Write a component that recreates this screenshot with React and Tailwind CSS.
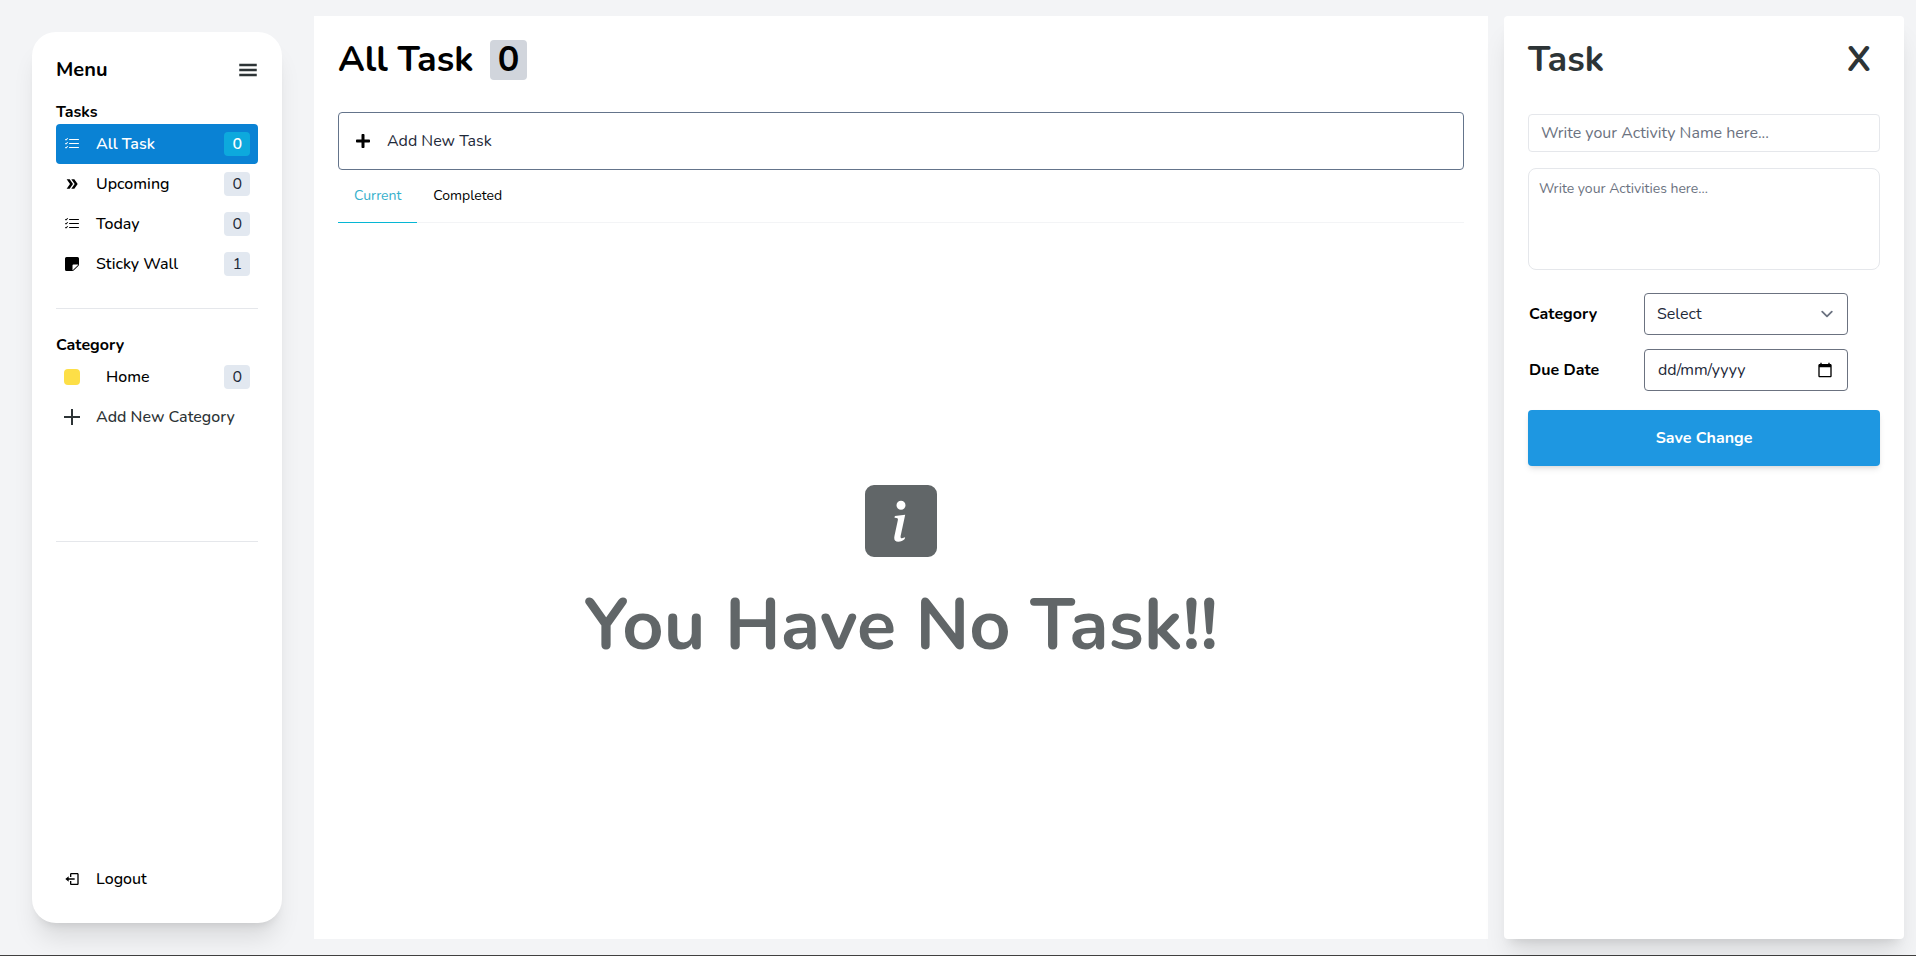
import { useState } from "react";
import clsx from "clsx";
import { FaPlus } from "react-icons/fa";
import { BsListCheck, BsStickyFill, BsInfoSquareFill } from "react-icons/bs";
import { BiLogOut } from "react-icons/bi";
import { GiHamburgerMenu } from "react-icons/gi";
import { MdCalendarToday, MdDoubleArrow } from "react-icons/md";

const views = [
  { name: "All Task", count: 0, Icon: BsListCheck },
  { name: "Upcoming", count: 0, Icon: MdDoubleArrow },
  { name: "Today", count: 0, Icon: BsListCheck },
  { name: "Sticky Wall", count: 1, Icon: BsStickyFill },
];

function Count({ value, active }) {
  return (
    <span
      className={clsx(
        "ml-auto flex h-6 items-center rounded px-2",
        active ? "bg-[#0da9dd] text-white" : "bg-slate-200 font-normal text-gray-800"
      )}
    >
      {value}
    </span>
  );
}

function Sidebar({ view, onSelect }) {
  return (
    <aside className="m-8 flex w-[250px] shrink-0 flex-col rounded-3xl bg-white p-6 font-medium shadow-xl">
      <div className="mb-4 flex h-7 items-center justify-between">
        <h2 className="text-xl font-bold">Menu</h2>
        <button type="button" aria-label="Toggle menu" className="text-xl text-[#2d3436]">
          <GiHamburgerMenu />
        </button>
      </div>

      <h3 className="font-bold">Tasks</h3>
      <nav className="mb-6 flex flex-col">
        {views.map(({ name, count, Icon }) => {
          const active = name === view;
          return (
            <button
              key={name}
              type="button"
              onClick={() => onSelect(name)}
              className={clsx(
                "flex h-10 items-center gap-4 rounded px-2",
                active && "bg-[#0a82d4] font-semibold text-white"
              )}
            >
              <Icon className="shrink-0" />
              {name}
              <Count value={count} active={active} />
            </button>
          );
        })}
      </nav>

      <section className="flex h-[234px] flex-col border-y border-gray-200 pt-6">
        <h3 className="font-bold">Category</h3>
        <button type="button" className="flex h-10 items-center gap-[26px] px-2">
          <span className="size-4 rounded bg-[#fddf47]" />
          Home
          <Count value={0} />
        </button>
        <button type="button" className="flex h-10 items-center gap-4 px-2 text-[#2d3436]">
          <svg viewBox="0 0 16 16" className="size-4 shrink-0" stroke="currentColor" strokeWidth="2" aria-hidden="true">
            <path d="M8 0v16M0 8h16" />
          </svg>
          <span className="whitespace-nowrap">Add New Category</span>
        </button>
      </section>

      <button type="button" className="mt-auto flex h-10 items-center gap-4 px-2">
        <BiLogOut />
        Logout
      </button>
    </aside>
  );
}

function TaskList({ title }) {
  const [tab, setTab] = useState("Current");
  return (
    <main className="my-4 flex min-w-0 flex-1 flex-col bg-white p-6">
      <h1 className="flex items-center gap-4 text-4xl font-bold leading-10">
        {title}
        <span className="rounded bg-gray-300 px-2">0</span>
      </h1>
      <button
        type="button"
        className="mt-8 flex h-[58px] shrink-0 items-center gap-4 rounded border border-[#64748b] px-4 text-gray-800"
      >
        <FaPlus className="text-black" />
        Add New Task
      </button>
      <div role="tablist" className="flex border-b border-gray-100 text-sm">
        {["Current", "Completed"].map((name) => (
          <button
            key={name}
            type="button"
            role="tab"
            aria-selected={tab === name}
            onClick={() => setTab(name)}
            className={clsx(
              "-mb-px border-b px-4 py-4",
              tab === name ? "border-[#06b6d4] text-[#35b0cc]" : "border-transparent"
            )}
          >
            {name}
          </button>
        ))}
      </div>
      <div className="flex flex-1 flex-col items-center justify-center gap-8 pt-2 text-[#2d3436] opacity-75">
        <BsInfoSquareFill className="size-[72px]" />
        <p className="text-7xl font-bold leading-none">You Have No Task!!</p>
      </div>
    </main>
  );
}

function TaskForm() {
  return (
    <form
      onSubmit={(e) => e.preventDefault()}
      className="my-4 ml-4 mr-3 flex w-[400px] shrink-0 flex-col rounded bg-white p-6 shadow-xl"
    >
      <div className="flex h-10 items-center justify-between text-4xl font-bold text-[#2d3436]">
        <h2>Task</h2>
        <button type="button" aria-label="Close" className="px-[9px]">
          X
        </button>
      </div>
      <input
        type="text"
        aria-label="Activity name"
        placeholder="Write your Activity Name here..."
        className="mt-[34px] h-[38px] rounded border border-gray-200 px-3 placeholder:text-[#6b7280]"
      />
      <textarea
        aria-label="Activities"
        placeholder="Write your Activities here..."
        className="mt-4 h-[102px] resize-none rounded-lg border border-gray-200 p-[10px] text-sm placeholder:text-[#6b7280]"
      />
      <div className="mt-[23px] grid grid-cols-[116px_204px] items-center gap-y-[14px]">
        <label htmlFor="category" className="pl-px font-bold">
          Category
        </label>
        <div className="relative">
          <select
            id="category"
            className="h-[42px] w-full appearance-none rounded border border-[#6b7280] bg-white pl-3 pr-10 text-gray-800"
          >
            <option>Select</option>
            <option>Home</option>
          </select>
          <svg
            viewBox="0 0 20 20"
            fill="none"
            className="pointer-events-none absolute right-[9px] top-[9px] size-6"
            aria-hidden="true"
          >
            <path stroke="#6b7280" strokeLinecap="round" strokeLinejoin="round" strokeWidth="1.5" d="M6 8l4 4 4-4" />
          </svg>
        </div>
        <label htmlFor="due" className="pl-px font-bold">
          Due Date
        </label>
        <div className="flex h-[42px] items-center rounded border border-[#6b7280] pl-[13px] pr-[14px]">
          <input
            id="due"
            type="text"
            placeholder="dd/mm/yyyy"
            className="min-w-0 flex-1 placeholder:text-gray-800"
          />
          <button type="button" aria-label="Choose date">
            <MdCalendarToday />
          </button>
        </div>
      </div>
      <button type="submit" className="mt-[19px] h-14 rounded bg-[#1e97e1] font-bold text-white shadow-md">
        Save Change
      </button>
    </form>
  );
}

export default function App() {
  const [view, setView] = useState("All Task");
  return (
    <div className="flex min-h-screen border-b border-neutral-700 bg-gray-100 font-['Nunito','Open_Sans',sans-serif] text-base text-black">
      <Sidebar view={view} onSelect={setView} />
      <TaskList title={view} />
      <TaskForm />
    </div>
  );
}
